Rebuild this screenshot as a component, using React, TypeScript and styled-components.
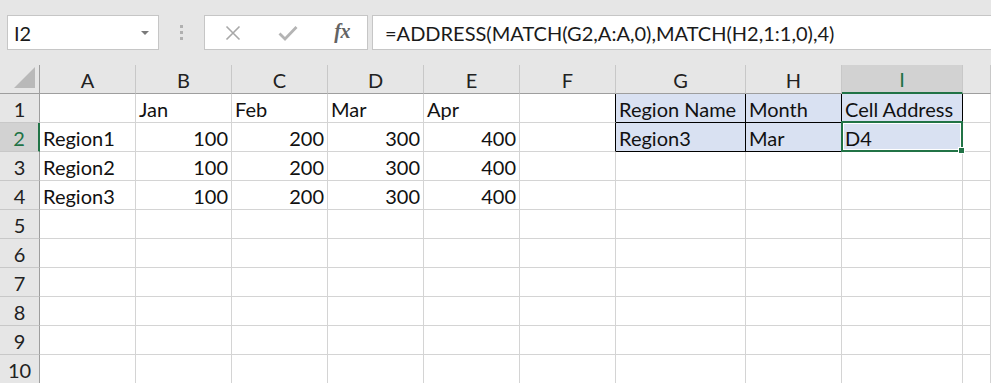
import React from "react";
import styled, { createGlobalStyle, css } from "styled-components";

const GREEN = "#217346";
const FONT = `Lato, "Open Sans", sans-serif`;

const GlobalStyle = createGlobalStyle`
  * { box-sizing: border-box; }
  html, body { margin: 0; padding: 0; background: #ffffff; overflow: hidden; }
  body { font-family: ${FONT}; }
`;

const Page = styled.div`
  width: 991px;
  height: 383px;
  overflow: hidden;
  background: #ffffff;
`;

const FormulaArea = styled.div`
  height: 65px;
  display: flex;
  align-items: flex-start;
  padding: 15px 0 0 7px;
  background: #e6e6e6;
`;

const Box = styled.div`
  height: 35px;
  background: #ffffff;
  border: 1px solid #c6c6c6;
  display: flex;
  align-items: center;
`;

const NameBox = styled(Box)`
  width: 152px;
  padding: 0 9px 0 6px;
  justify-content: space-between;
`;

const BarText = styled.span`
  font-family: ${FONT};
  font-size: 20px;
  color: #1a1a1a;
  white-space: nowrap;
  padding-top: 1px;
`;

const Caret = styled.span`
  width: 0;
  height: 0;
  border-left: 4px solid transparent;
  border-right: 4px solid transparent;
  border-top: 4px solid #7a7a7a;
`;

const Grip = styled.div`
  width: 45px;
  height: 35px;
  display: flex;
  flex-direction: column;
  align-items: center;
  justify-content: center;
  gap: 3px;
`;

const GripDot = styled.span`
  width: 3px;
  height: 3px;
  background: #b0b0b0;
`;

const IconBox = styled(Box)`
  width: 164px;
  padding: 0 17px 0 20px;
  justify-content: space-between;
`;

const Fx = styled.span`
  font-family: "Liberation Serif", "DejaVu Serif", serif;
  font-style: italic;
  font-weight: 700;
  font-size: 20px;
  color: #636363;
  letter-spacing: -0.5px;
  padding-bottom: 2px;
`;

const FormulaBox = styled(Box)`
  flex: 1;
  margin-left: 4px;
  margin-right: -4px;
  padding-left: 12px;
`;

const Sheet = styled.div`
  display: grid;
  grid-template-columns: 40px repeat(6, 96px) 130px 96px 121px 1fr;
  grid-auto-rows: 29px;
`;

const BaseCell = styled.div`
  position: relative;
  display: flex;
  align-items: center;
  font-family: ${FONT};
  font-size: 20px;
  color: #111111;
  white-space: nowrap;
  padding-top: 1px;
`;

const Corner = styled(BaseCell)`
  background: #e6e6e6;
  border-right: 1px solid #9e9e9e;
  border-bottom: 1px solid #9e9e9e;
  justify-content: flex-end;
  align-items: flex-end;
  padding: 0 3px 4px 0;
`;

const ColHead = styled(BaseCell)<{ $sel?: boolean }>`
  justify-content: center;
  background: ${(p) => (p.$sel ? "#d2d2d2" : "#e6e6e6")};
  border-right: 1px solid #c8c8c8;
  border-bottom: ${(p) => (p.$sel ? `2px solid ${GREEN}` : "1px solid #9e9e9e")};
  color: ${(p) => (p.$sel ? GREEN : "#222222")};
`;

const RowHead = styled(BaseCell)<{ $sel?: boolean }>`
  justify-content: center;
  background: ${(p) => (p.$sel ? "#d2d2d2" : "#e6e6e6")};
  border-right: ${(p) => (p.$sel ? `2px solid ${GREEN}` : "1px solid #9e9e9e")};
  border-bottom: 1px solid #c8c8c8;
  color: ${(p) => (p.$sel ? GREEN : "#222222")};
`;

const Cell = styled(BaseCell)<{
  $right?: boolean;
  $fill?: boolean;
  $br?: boolean;
  $bb?: boolean;
}>`
  justify-content: ${(p) => (p.$right ? "flex-end" : "flex-start")};
  padding-left: 3px;
  padding-right: 3px;
  background: ${(p) => (p.$fill ? "#d9e1f2" : "#ffffff")};
  border-right: 1px solid ${(p) => (p.$br ? "#000000" : "#d4d4d4")};
  border-bottom: 1px solid ${(p) => (p.$bb ? "#000000" : "#d4d4d4")};
  ${(p) =>
    p.$fill &&
    css`
      z-index: 1;
    `}
`;

const Selection = styled.div`
  position: absolute;
  top: -2px;
  left: -1px;
  right: -1px;
  bottom: -1px;
  border: 2px solid ${GREEN};
  box-shadow: inset 0 0 0 1px #ffffff;
  pointer-events: none;
  z-index: 2;
`;

const FillHandle = styled.div`
  position: absolute;
  right: -4px;
  bottom: -4px;
  width: 7px;
  height: 7px;
  background: ${GREEN};
  border: 1px solid #ffffff;
`;

const XIcon = () => (
  <svg width="16" height="16" viewBox="0 0 16 16">
    <path d="M1.5 1.5 L14.5 14.5 M14.5 1.5 L1.5 14.5" stroke="#a8a8a8" strokeWidth="1.6" fill="none" />
  </svg>
);

const CheckIcon = () => (
  <svg width="20" height="16" viewBox="0 0 20 16">
    <path d="M1.5 8.5 L7 14 L18.5 2" stroke="#b4b4b4" strokeWidth="2.8" fill="none" />
  </svg>
);

const CornerTriangle = () => (
  <svg width="22" height="22" viewBox="0 0 22 22">
    <polygon points="21,0 21,21 0,21" fill="#b9b9b9" />
  </svg>
);

type Val = { t: string; n?: boolean };
const cols = ["A", "B", "C", "D", "E", "F", "G", "H", "I", ""];

const data: Record<number, Record<string, Val>> = {
  1: {
    B: { t: "Jan" },
    C: { t: "Feb" },
    D: { t: "Mar" },
    E: { t: "Apr" },
    G: { t: "Region Name" },
    H: { t: "Month" },
    I: { t: "Cell Address" },
  },
  2: {
    A: { t: "Region1" },
    B: { t: "100", n: true },
    C: { t: "200", n: true },
    D: { t: "300", n: true },
    E: { t: "400", n: true },
    G: { t: "Region3" },
    H: { t: "Mar" },
    I: { t: "D4" },
  },
  3: {
    A: { t: "Region2" },
    B: { t: "100", n: true },
    C: { t: "200", n: true },
    D: { t: "300", n: true },
    E: { t: "400", n: true },
  },
  4: {
    A: { t: "Region3" },
    B: { t: "100", n: true },
    C: { t: "200", n: true },
    D: { t: "300", n: true },
    E: { t: "400", n: true },
  },
};

const inBlock = (r: number, c: string) => (r === 1 || r === 2) && ["G", "H", "I"].includes(c);

export default function App() {
  const rows = Array.from({ length: 10 }, (_, i) => i + 1);
  return (
    <Page>
      <GlobalStyle />
      <FormulaArea>
        <NameBox>
          <BarText>I2</BarText>
          <Caret />
        </NameBox>
        <Grip>
          <GripDot />
          <GripDot />
          <GripDot />
        </Grip>
        <IconBox>
          <XIcon />
          <CheckIcon />
          <Fx>fx</Fx>
        </IconBox>
        <FormulaBox>
          <BarText>=ADDRESS(MATCH(G2,A:A,0),MATCH(H2,1:1,0),4)</BarText>
        </FormulaBox>
      </FormulaArea>
      <Sheet>
        <Corner>
          <CornerTriangle />
        </Corner>
        {cols.map((c, i) => (
          <ColHead key={"h" + i} $sel={c === "I"}>
            {c}
          </ColHead>
        ))}
        {rows.map((r) => (
          <React.Fragment key={r}>
            <RowHead $sel={r === 2}>{r}</RowHead>
            {cols.map((c, i) => {
              const v = data[r]?.[c];
              const block = inBlock(r, c);
              const leftOfBlock = (r === 1 || r === 2) && c === "F";
              return (
                <Cell
                  key={r + "-" + i}
                  $right={v?.n}
                  $fill={block}
                  $br={block || leftOfBlock}
                  $bb={block}
                >
                  {v?.t}
                  {r === 2 && c === "I" && (
                    <Selection>
                      <FillHandle />
                    </Selection>
                  )}
                </Cell>
              );
            })}
          </React.Fragment>
        ))}
      </Sheet>
    </Page>
  );
}
